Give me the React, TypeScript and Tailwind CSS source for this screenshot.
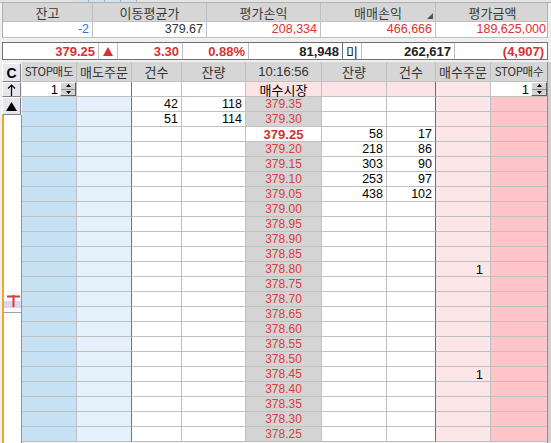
import React from 'react';

const KR = { fontFamily: '"Noto Sans CJK KR", "Liberation Sans", sans-serif' };
const NUM = { fontFamily: '"Liberation Sans", "Noto Sans CJK KR", sans-serif' };

type Row = {
  price: string;
  kind?: 'market' | 'current';
  sellCnt?: number;
  sellQty?: number;
  buyQty?: number;
  buyCnt?: number;
  buyOrder?: number;
};

const rows: Row[] = [
  { price: '매수시장', kind: 'market' },
  { price: '379.35', sellCnt: 42, sellQty: 118 },
  { price: '379.30', sellCnt: 51, sellQty: 114 },
  { price: '379.25', kind: 'current', buyQty: 58, buyCnt: 17 },
  { price: '379.20', buyQty: 218, buyCnt: 86 },
  { price: '379.15', buyQty: 303, buyCnt: 90 },
  { price: '379.10', buyQty: 253, buyCnt: 97 },
  { price: '379.05', buyQty: 438, buyCnt: 102 },
  { price: '379.00' },
  { price: '378.95' },
  { price: '378.90' },
  { price: '378.85' },
  { price: '378.80', buyOrder: 1 },
  { price: '378.75' },
  { price: '378.70' },
  { price: '378.65' },
  { price: '378.60' },
  { price: '378.55' },
  { price: '378.50' },
  { price: '378.45', buyOrder: 1 },
  { price: '378.40' },
  { price: '378.35' },
  { price: '378.30' },
  { price: '378.25' },
];

function Spinner() {
  return (
    <div className="flex flex-col w-[16px] h-[14px] bg-[#d4d4d4] border border-t-white border-l-white border-r-[#606060] border-b-[#606060]">
      <div className="flex-1 flex items-center justify-center border-b border-[#909090]">
        <svg width="5" height="3" viewBox="0 0 5 3"><path d="M2.5 0L5 3H0z" fill="#000" /></svg>
      </div>
      <div className="flex-1 flex items-center justify-center">
        <svg width="5" height="3" viewBox="0 0 5 3"><path d="M0 0h5L2.5 3z" fill="#000" /></svg>
      </div>
    </div>
  );
}

function SideButton({ children, className }: { children: React.ReactNode; className: string }) {
  return (
    <div
      className={`flex items-center justify-center w-[19px] bg-[#e6e6ee] border border-t-white border-l-white border-r-[#808080] border-b-[#808080] ${className}`}
    >
      {children}
    </div>
  );
}

const line = 'border-r border-b border-[#c0c0c0]';

export default function App() {
  return (
    <div className="w-[551px] h-[443px] overflow-hidden bg-[#f0f0f0] text-black text-[12px] leading-none select-none">
      {/* strip of the row above */}
      <div className="h-[3px] flex border-b border-[#b0b0b0] bg-[#e4e4e4]">
        <div className="w-[73px]" />
        <div className="w-[16px] bg-[#cfe3f4] border-r border-[#b0b0b0]" />
        <div className="w-[16px] bg-[#cfe3f4] border-r border-[#b0b0b0]" />
        <div className="w-[16px] bg-[#cfe3f4] border-r border-[#b0b0b0]" />
        <div className="w-[16px] bg-[#cfe3f4] border-r border-[#b0b0b0]" />
      </div>

      {/* balance table */}
      <div className="ml-[2px] w-[546px] border-l border-r border-[#b0b0b0]" style={KR}>
        <div className="grid grid-cols-[90px_114px_114px_115px_113px] h-[19px] bg-[#d6d6d6] text-[#3a3a3a] border-b border-[#c0c0c0]">
          {['잔고', '이동평균가', '평가손익', '매매손익', '평가금액'].map((h) => (
            <div key={h} className="relative flex items-center justify-center border-r border-[#c0c0c0] last:border-r-0 text-[13px]">
              {h}
              {h === '매매손익' && (
                <svg className="absolute right-[2px] bottom-[2px]" width="6" height="6" viewBox="0 0 6 6">
                  <path d="M6 0V6H0z" fill="#505050" />
                </svg>
              )}
            </div>
          ))}
        </div>
        <div className="grid grid-cols-[90px_114px_114px_115px_113px] h-[16px] bg-white border-b border-[#c0c0c0] text-[12.5px]" style={NUM}>
          <div className="flex items-center justify-end pr-[3px] text-[#2f6fe0] border-r border-[#c0c0c0]">-2</div>
          <div className="flex items-center justify-end pr-[3px] text-[#333] border-r border-[#c0c0c0]">379.67</div>
          <div className="flex items-center justify-end pr-[3px] text-[#e03030] border-r border-[#c0c0c0]">208,334</div>
          <div className="flex items-center justify-end pr-[3px] text-[#e03030] border-r border-[#c0c0c0]">466,666</div>
          <div className="flex items-center justify-end pr-[3px] text-[#e03030]">189,625,000</div>
        </div>
      </div>

      {/* current price bar */}
      <div
        className="mt-[4px] ml-[2px] w-[546px] h-[18px] flex bg-white border border-[#707070] font-bold text-[13px]"
        style={NUM}
      >
        <div className="w-[96px] flex items-center justify-end pr-[3px] text-[#d83030] border-r border-[#c0c0c0]">379.25</div>
        <div className="w-[19px] flex items-center justify-center border-r border-[#c0c0c0]">
          <svg width="10" height="9" viewBox="0 0 10 9"><path d="M5 0L10 9H0z" fill="#d83030" /></svg>
        </div>
        <div className="w-[65px] flex items-center justify-end pr-[3px] text-[#d83030] border-r border-[#c0c0c0]">3.30</div>
        <div className="w-[66px] flex items-center justify-end pr-[3px] text-[#d83030] border-r border-[#c0c0c0]">0.88%</div>
        <div className="w-[94px] flex items-center justify-end pr-[3px] text-[#222] border-r border-[#707070]">81,948</div>
        <div className="w-[19px] flex items-center justify-center text-[#222] font-normal border-r border-[#c0c0c0]" style={KR}>미</div>
        <div className="w-[93px] flex items-center justify-end pr-[3px] text-[#222] border-r border-[#c0c0c0]">262,617</div>
        <div className="flex-1 flex items-center justify-end pr-[3px] text-[#d83030]">(4,907)</div>
      </div>

      {/* order book */}
      <div className="mt-[2px] flex">
        <div className="w-[22px] pl-[2px] flex flex-col h-[381px]">
          <SideButton className="h-[19px] mt-[1px]">
            <span className="font-bold text-[14px]" style={NUM}>C</span>
          </SideButton>
          <SideButton className="h-[15px]">
            <svg width="9" height="12" viewBox="0 0 9 12">
              <path d="M4.5 1V12M1 4.5L4.5 1L8 4.5" stroke="#000" strokeWidth="1.2" fill="none" />
            </svg>
          </SideButton>
          <SideButton className="h-[18px]">
            <svg width="11" height="9" viewBox="0 0 11 9"><path d="M5.5 0L11 9H0z" fill="#000" /></svg>
          </SideButton>
          <div className="flex-1 flex flex-col bg-white border-l-2 border-r border-l-[#f5a623] border-r-[#d8862a]">
            <div className="h-[179px]" />
            <div className="relative h-[15px]">
              <div className="absolute left-0 right-0 top-[7px] h-[7px] bg-[#dcd4f0]" />
              <svg className="absolute left-[3px] top-0" width="13" height="13" viewBox="0 0 13 13">
                <path d="M0 2.5H13M6.5 1V13" stroke="#e03838" strokeWidth="2" />
              </svg>
            </div>
            <div className="mt-[3px] h-px bg-[#a0a0a0]" />
          </div>
        </div>

        <div className="flex-1 flex">
          <div
            className="grid grid-cols-[55px_55px_50px_64px_76px_65px_49px_55px_56px] grid-rows-[20px_repeat(24,15px)] w-[525px]"
            style={KR}
          >
            {/* header */}
            {['STOP매도', '매도주문', '건수', '잔량', '10:16:56', '잔량', '건수', '매수주문', 'STOP매수'].map((h, i) => (
              <div
                key={i}
                className={`flex items-center justify-center bg-[#d6d6d6] text-[#333] border-b border-[#c0c0c0] ${
                  i === 8 ? '' : 'border-r'
                } ${h.startsWith('STOP') ? 'text-[11.5px] tracking-tight' : 'text-[13px]'}`}
                style={h === '10:16:56' ? NUM : undefined}
              >
                {h}
              </div>
            ))}

            {rows.map((r, idx) => {
              const first = idx === 0;
              const cur = r.kind === 'current';
              return (
                <React.Fragment key={idx}>
                  <div className={`${line} ${first ? 'bg-white flex items-center justify-end' : 'bg-[#c5e1f3]'}`} style={NUM}>
                    {first && (
                      <>
                        <span className="mr-[2px] text-[13px]">1</span>
                        <Spinner />
                      </>
                    )}
                  </div>
                  <div className={`border-b border-r border-b-[#c0c0c0] border-r-[#2f7fe8] ${first ? 'bg-white' : 'bg-[#e4f1fc]'}`} />
                  <div className={`${line} bg-white flex items-center justify-end pr-[3px] text-[12.5px]`} style={NUM}>
                    {r.sellCnt}
                  </div>
                  <div className={`${line} bg-white flex items-center justify-end pr-[3px] text-[12.5px]`} style={NUM}>
                    {r.sellQty}
                  </div>
                  <div
                    className={`${line} flex items-center justify-center ${
                      first
                        ? 'bg-[#fce4e6] text-black text-[13px]'
                        : cur
                        ? 'bg-white text-[#d83030] font-bold text-[13px]'
                        : 'bg-[#d4d4d4] text-[#dc3c3c]'
                    }`}
                    style={first ? KR : NUM}
                  >
                    {r.price}
                  </div>
                  <div className={`${line} ${first ? 'bg-[#fce4e6]' : 'bg-white'} flex items-center justify-end pr-[3px] text-[12.5px]`} style={NUM}>
                    {r.buyQty}
                  </div>
                  <div
                    className={`border-b border-r border-b-[#c0c0c0] border-r-[#e03838] ${
                      first ? 'bg-[#fce4e6]' : 'bg-white'
                    } flex items-center justify-end pr-[3px] text-[12.5px]`}
                    style={NUM}
                  >
                    {r.buyCnt}
                  </div>
                  <div className={`${line} bg-[#fce6e8] flex items-center justify-end pr-[7px] text-[13px]`} style={NUM}>
                    {r.buyOrder}
                  </div>
                  <div className={`border-b border-[#c0c0c0] ${first ? 'bg-white flex items-center justify-end' : 'bg-[#ffc4c8]'}`} style={NUM}>
                    {first && (
                      <>
                        <span className="mr-[2px] text-[13px]">1</span>
                        <Spinner />
                      </>
                    )}
                  </div>
                </React.Fragment>
              );
            })}
          </div>
          <div className="flex-1 bg-[#d0d0d0] border-l border-[#909090]" />
        </div>
      </div>
    </div>
  );
}
